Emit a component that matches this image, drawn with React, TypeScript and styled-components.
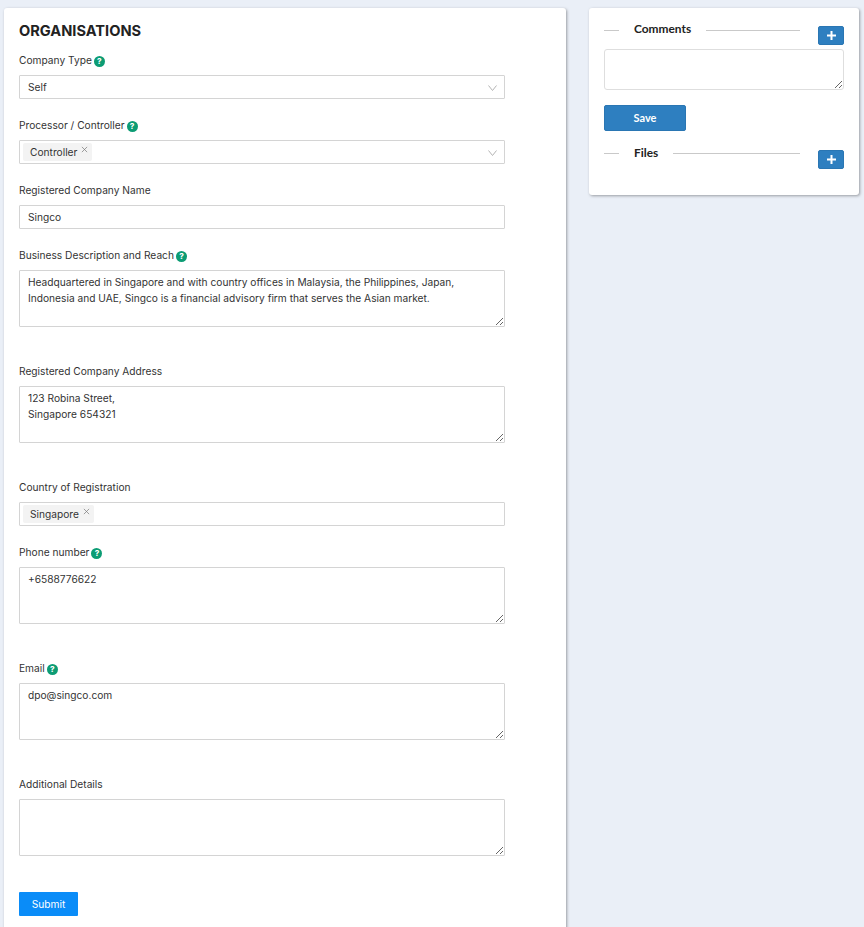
import React from "react";
import styled, { createGlobalStyle } from "styled-components";

const GlobalStyle = createGlobalStyle`
	html, body {
		margin: 0;
		padding: 0;
		height: 100%;
		overflow: hidden;
		background: #eaeff7;
	}
	* {
		box-sizing: border-box;
	}
`;

const Chevron = () => (
	<ChevronIcon viewBox="0 0 9 6" aria-hidden="true">
		<path d="M.5.5l4 5 4-5" fill="none" stroke="#b4b4b4" strokeWidth="1" />
	</ChevronIcon>
);

const Help = () => <HelpBadge>?</HelpBadge>;

const Tag = ({ children }: { children: React.ReactNode }) => (
	<TagBox>
		{children}
		<TagClose viewBox="0 0 8 8" aria-hidden="true">
			<path d="M1 1l6 6M7 1L1 7" stroke="#777" strokeWidth="0.8" fill="none" />
		</TagClose>
	</TagBox>
);

const TextField = ({
	label,
	help,
	value,
	last,
}: {
	label: string;
	help?: boolean;
	value: string;
	last?: boolean;
}) => (
	<Field $space={last ? 36 : 39}>
		<Label>
			{label}
			{help && <Help />}
		</Label>
		<Area defaultValue={value} />
	</Field>
);

export default function App() {
	return (
		<Page>
			<GlobalStyle />
			<MainPanel>
				<Title>ORGANISATIONS</Title>
				<Field>
					<Label>
						Company Type
						<Help />
					</Label>
					<Control>
						Self
						<Chevron />
					</Control>
				</Field>
				<Field>
					<Label>
						Processor / Controller
						<Help />
					</Label>
					<Control $tagged>
						<Tag>Controller</Tag>
						<Chevron />
					</Control>
				</Field>
				<Field>
					<Label>Registered Company Name</Label>
					<Control>Singco</Control>
				</Field>
				<TextField
					label="Business Description and Reach"
					help
					value="Headquartered in Singapore and with country offices in Malaysia, the Philippines, Japan, Indonesia and UAE, Singco is a financial advisory firm that serves the Asian market."
				/>
				<TextField
					label="Registered Company Address"
					value={"123 Robina Street,\nSingapore 654321"}
				/>
				<Field>
					<Label>Country of Registration</Label>
					<Control $tagged>
						<Tag>Singapore</Tag>
					</Control>
				</Field>
				<TextField label="Phone number" help value="+6588776622" />
				<TextField label="Email" help value="dpo@singco.com" />
				<TextField label="Additional Details" value="" last />
				<SubmitButton>Submit</SubmitButton>
			</MainPanel>
			<SidePanel>
				<SectionRow>
					<SectionHead>
						<Rule $short />
						<SectionName $lift={4}>Comments</SectionName>
						<Rule />
					</SectionHead>
					<AddButton aria-label="Add comment" $drop={4}>
						<PlusIcon />
					</AddButton>
				</SectionRow>
				<CommentBox />
				<SaveButton>Save</SaveButton>
				<SectionRow>
					<SectionHead>
						<Rule $short />
						<SectionName $lift={2}>Files</SectionName>
						<Rule />
					</SectionHead>
					<AddButton aria-label="Add file" $drop={5}>
						<PlusIcon />
					</AddButton>
				</SectionRow>
			</SidePanel>
		</Page>
	);
}

const PlusIcon = () => (
	<svg width="9" height="9" viewBox="0 0 9 9" aria-hidden="true">
		<path d="M4.5 0v9M0 4.5h9" stroke="#fff" strokeWidth="2" />
	</svg>
);

const Page = styled.div`
	display: flex;
	align-items: flex-start;
	gap: 23px;
	padding: 8px 5px 0 4px;
	font-family: Inter, "Liberation Sans", sans-serif;
	color: #262626;
`;

const MainPanel = styled.main`
	width: 562px;
	height: 1000px;
	flex: none;
	background: #fff;
	border-radius: 3px;
	box-shadow: 1px 1px 3px rgba(0, 0, 0, 0.35);
	padding: 14px 15px;
`;

const Title = styled.h1`
	margin: 0 0 15px;
	font-size: 14.6px;
	line-height: 18px;
	font-weight: 700;
	color: #222;
`;

const Field = styled.div<{ $space?: number }>`
	width: 486px;
	margin-bottom: ${({ $space }) => $space ?? 21}px;
`;

const Label = styled.label`
	display: flex;
	align-items: flex-start;
	height: 20px;
	font-size: 10.2px;
	line-height: 11px;
	color: #333;
`;

const HelpBadge = styled.span`
	width: 11px;
	height: 11px;
	margin: 1px 0 0 2px;
	border-radius: 50%;
	background: #0c9c74;
	color: #fff;
	font-size: 8px;
	font-weight: 800;
	line-height: 11px;
	text-align: center;
`;

const Control = styled.div<{ $tagged?: boolean }>`
	position: relative;
	display: flex;
	align-items: center;
	height: 24px;
	padding-left: ${({ $tagged }) => ($tagged ? 3 : 8)}px;
	background: #fff;
	border: 1px solid #d4d4d4;
	border-radius: 1px;
	font-size: 10.2px;
	color: #333;
`;

const ChevronIcon = styled.svg`
	position: absolute;
	right: 7px;
	top: 9px;
	width: 9px;
	height: 6px;
`;

const TagBox = styled.span`
	display: flex;
	align-items: center;
	height: 18px;
	padding: 0 4px 0 7px;
	background: #f3f3f3;
	border-radius: 2px;
	font-size: 10.2px;
	color: #333;
`;

const TagClose = styled.svg`
	width: 7px;
	height: 7px;
	margin: -6px 0 0 4px;
`;

const Area = styled.textarea`
	display: block;
	width: 100%;
	height: 57px;
	padding: 4px 8px;
	background: #fff;
	border: 1px solid #d4d4d4;
	border-radius: 1px;
	outline: none;
	font-family: Inter, "Liberation Sans", sans-serif;
	font-size: 10.2px;
	line-height: 15.7px;
	color: #333;
`;

const SubmitButton = styled.button`
	display: block;
	width: 59px;
	height: 24px;
	padding: 0;
	background: #0a8cf8;
	border: 0;
	border-radius: 1px;
	color: #fff;
	font-family: Inter, "Liberation Sans", sans-serif;
	font-size: 10.2px;
`;

const SidePanel = styled.aside`
	width: 270px;
	height: 187px;
	flex: none;
	background: #fff;
	border-radius: 3px;
	box-shadow: 1px 1px 3px rgba(0, 0, 0, 0.35);
	padding: 14px 15px;
	font-family: Lato, "Noto Sans", sans-serif;
`;

const SectionRow = styled.div`
	display: flex;
	align-items: flex-start;
	gap: 18px;
	height: 27px;
`;

const SectionHead = styled.div`
	flex: 1;
	display: flex;
	align-items: center;
	height: 16px;
`;

const SectionName = styled.h2<{ $lift: number }>`
	margin: -${({ $lift }) => $lift}px 15px 0;
	font-size: 11.9px;
	font-weight: 700;
	color: #222;
`;

const Rule = styled.span<{ $short?: boolean }>`
	height: 1px;
	background: #c9c9c9;
	${({ $short }) => ($short ? "width: 15px;" : "flex: 1;")}
`;

const AddButton = styled.button<{ $drop: number }>`
	display: flex;
	align-items: center;
	justify-content: center;
	width: 26px;
	height: 19px;
	margin-top: ${({ $drop }) => $drop}px;
	padding: 0;
	background: #2e7fc0;
	border: 1px solid #2a76b3;
	border-radius: 2px;
`;

const CommentBox = styled.textarea`
	display: block;
	width: 100%;
	height: 41px;
	background: #fff;
	border: 1px solid #dedede;
	border-radius: 3px;
	outline: none;
`;

const SaveButton = styled.button`
	display: block;
	width: 82px;
	height: 26px;
	margin: 15px 0 14px;
	padding: 0 0 2px;
	background: #2e7fc0;
	border: 1px solid #2a76b3;
	border-radius: 2px;
	color: #fff;
	font-family: Lato, "Noto Sans", sans-serif;
	font-size: 11px;
	font-weight: 700;
`;
